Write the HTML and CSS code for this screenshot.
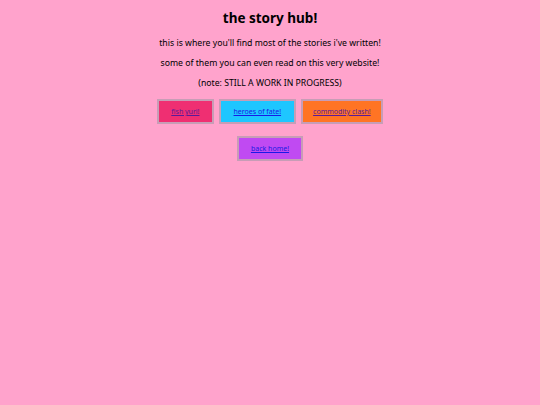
FILE: index.html
```html
<!DOCTYPE html>
<html>
   <head>
      <title>the story hub!</title>
      <link rel="stylesheet" href="styles.css">
   </head>
   <body>
      <div class="container">
         <h1>the story hub!</h1>
         <p>this is where you'll find most of the stories i've written!</p>
         <p>some of them you can even read on this very website!</p>
         <p>(note: STILL A WORK IN PROGRESS)</p>
         <div class="story-row">
            <div class="story-box fish"><a class="seen" href="#">fish yuri!</a></div>
            <div class="story-box heroes"><a href="#">heroes of fate!</a></div>
            <div class="story-box commodity"><a class="seen" href="#">commodity clash!</a></div>
         </div>
         <div class="story-row home-row">
            <div class="story-box home"><a href="#">back home!</a></div>
         </div>
      </div>
   </body>
</html>
```

FILE: styles.css
```css
body {
   margin: 0;
   background: #ffa3cc;
   font-family: "Comic Sans MS", "Noto Sans", sans-serif;
   color: #000;
}
.container {
   text-align: center;
}
h1 {
   font-size: 13.5px;
   line-height: 20px;
   margin: 8px 0;
}
p {
   font-size: 8.7px;
   line-height: 14px;
   margin: 6px 0;
}
.story-row {
   display: flex;
   justify-content: center;
   gap: 5px;
   margin-top: 9px;
}
.home-row {
   margin-top: 12px;
}
.story-box {
   border: 2px solid #c79db6;
   padding: 0 12px;
   line-height: 21px;
   font-size: 7px;
}
.story-box a {
   color: #1a1ae6;
}
.story-box a.seen {
   color: #5a1a9a;
}
.fish {
   background: #ef2f72;
}
.heroes {
   background: #1ec6ff;
   padding: 0 13px;
}
.commodity {
   background: #ff7424;
   padding: 0 10px;
}
.home {
   background: #c04af2;
}
```
